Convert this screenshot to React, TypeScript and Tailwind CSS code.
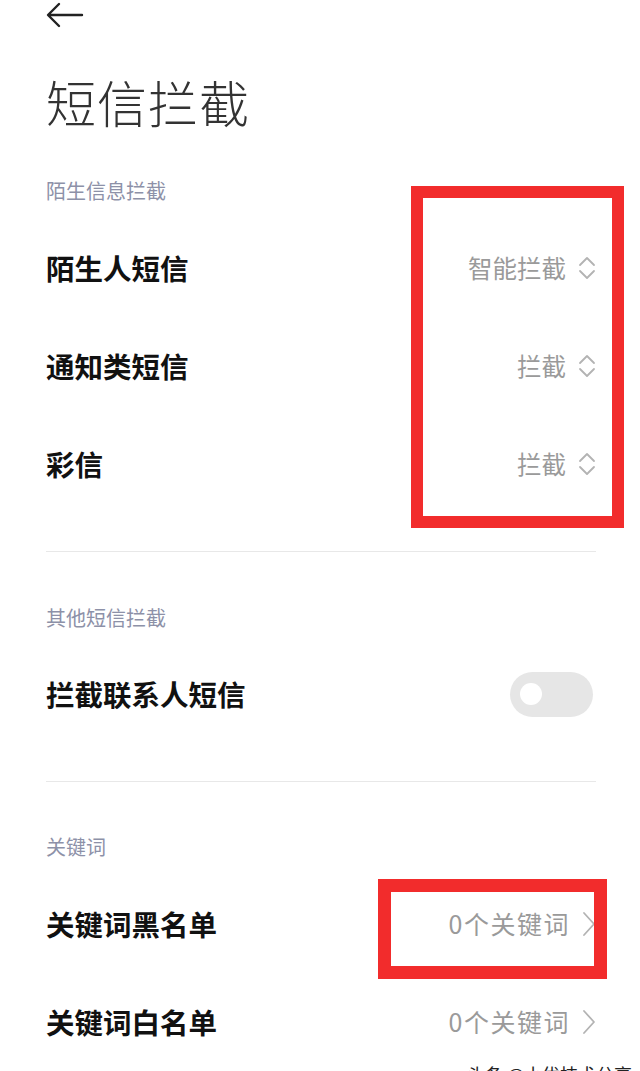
import type { ReactNode } from 'react'

const FONT = "font-['Noto_Sans_CJK_SC','Noto_Sans',sans-serif]"

/* =========================
   Icons
========================= */
function BackArrow() {
  return (
    <svg width="38" height="26" viewBox="0 0 38 26" fill="none" className="text-[#222]">
      <path d="M36 13H3M13 2L2 13l11 11" stroke="currentColor" strokeWidth="2.4" strokeLinecap="round" strokeLinejoin="round" />
    </svg>
  )
}

function UpDown() {
  return (
    <svg width="18" height="26" viewBox="0 0 18 26" fill="none" className="text-[#b3b3b3]">
      <path d="M2 10l7-7 7 7M2 16l7 7 7-7" stroke="currentColor" strokeWidth="1.8" strokeLinecap="round" strokeLinejoin="round" />
    </svg>
  )
}

function ChevronRight() {
  return (
    <svg width="14" height="26" viewBox="0 0 14 26" fill="none" className="text-[#b3b3b3]">
      <path d="M2 2l10 11-10 11" stroke="currentColor" strokeWidth="1.8" strokeLinecap="round" strokeLinejoin="round" />
    </svg>
  )
}

/* =========================
   UI helpers
========================= */
function SectionTitle({ children, className = '' }: { children: ReactNode; className?: string }) {
  return <div className={`h-[28px] text-[20px] leading-[28px] text-[#8d91a8] ${className}`}>{children}</div>
}

function Row({ title, right }: { title: string; right?: ReactNode }) {
  return (
    <div className="flex h-[98px] items-center justify-between">
      <span className="text-[28.5px] font-bold text-[#111]">{title}</span>
      {right}
    </div>
  )
}

function SelectValue({ value }: { value: string }) {
  return (
    <div className="flex items-center gap-[12px]">
      <span className="text-[24.5px] text-[#9a9a9a]">{value}</span>
      <UpDown />
    </div>
  )
}

function LinkValue({ value }: { value: string }) {
  return (
    <div className="flex items-center gap-[12px]">
      <span className="text-[25px] tracking-[1.5px] text-[#9a9a9a]">{value}</span>
      <ChevronRight />
    </div>
  )
}

function Toggle() {
  return (
    <div className="mr-[3px] flex h-[45px] w-[83px] items-center rounded-full bg-[#e6e6e6] pl-[10px]">
      <div className="h-[22px] w-[22px] rounded-full bg-white" />
    </div>
  )
}

/* =========================
   Page
========================= */
export default function App() {
  return (
    <main className={`relative h-[1071px] w-[640px] overflow-hidden bg-white ${FONT}`}>
      <div className="pl-[46px] pr-[44px]">
        {/* top bar */}
        <div className="flex h-[30px] items-center">
          <BackArrow />
        </div>

        <h1 className="mt-[41px] h-[60px] text-[50px] font-light leading-[60px] tracking-[1px] text-[#333]">短信拦截</h1>

        {/* 陌生信息 */}
        <SectionTitle className="mt-[46px]">陌生信息拦截</SectionTitle>
        <div className="mt-[14px]">
          <Row title="陌生人短信" right={<SelectValue value="智能拦截" />} />
          <Row title="通知类短信" right={<SelectValue value="拦截" />} />
          <Row title="彩信" right={<SelectValue value="拦截" />} />
        </div>

        <div className="mt-[38px] h-px bg-[#e8e8e8]" />

        {/* 其他 */}
        <SectionTitle className="mt-[52px]">其他短信拦截</SectionTitle>
        <div className="mt-[13px]">
          <Row title="拦截联系人短信" right={<Toggle />} />
        </div>

        <div className="mt-[38px] h-px bg-[#e8e8e8]" />

        {/* 关键词 */}
        <SectionTitle className="mt-[51px]">关键词</SectionTitle>
        <div className="mt-[14px]">
          <Row title="关键词黑名单" right={<LinkValue value="0个关键词" />} />
          <Row title="关键词白名单" right={<LinkValue value="0个关键词" />} />
        </div>
      </div>

      {/* annotation boxes */}
      <div className="absolute left-[411px] top-[186px] h-[342px] w-[213px] border-[12px] border-[#f22c2c]" />
      <div className="absolute left-[378px] top-[879px] h-[100px] w-[229px] border-[13px] border-[#f22c2c]" />

      {/* watermark, cut by the bottom edge */}
      <div className="absolute right-[8px] top-[1062px] text-[18px] leading-[24px] text-[#222]">头条 @小优技术分享</div>
    </main>
  )
}
